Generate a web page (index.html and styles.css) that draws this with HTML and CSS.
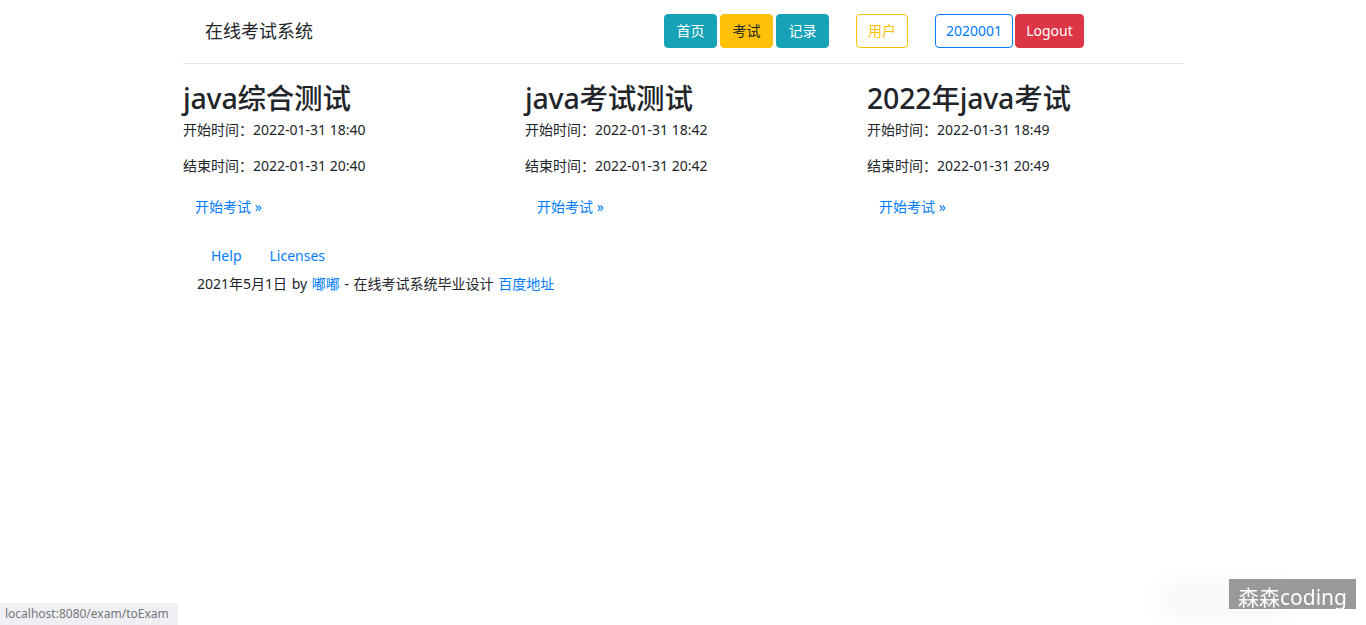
FILE: index.html
```html
<!DOCTYPE html>
<html lang="zh-CN">
<head>
<meta charset="utf-8">
<title>在线考试系统</title>
<link rel="stylesheet" href="styles.css">
</head>
<body>
<div class="container">
  <header class="navbar">
    <div class="brand">在线考试系统</div>
    <nav class="actions">
      <div class="group">
        <a class="btn btn-info">首页</a>
        <a class="btn btn-warning">考试</a>
        <a class="btn btn-info">记录</a>
      </div>
      <a class="btn btn-outline-warning">用户</a>
      <div class="group">
        <a class="btn btn-outline-primary">2020001</a>
        <a class="btn btn-danger">Logout</a>
      </div>
    </nav>
  </header>

  <main class="exams">
    <section class="exam">
      <h2>java综合测试</h2>
      <p>开始时间：2022-01-31 18:40</p>
      <p>结束时间：2022-01-31 20:40</p>
      <a class="btn-link">开始考试 »</a>
    </section>
    <section class="exam">
      <h2>java考试测试</h2>
      <p>开始时间：2022-01-31 18:42</p>
      <p>结束时间：2022-01-31 20:42</p>
      <a class="btn-link">开始考试 »</a>
    </section>
    <section class="exam">
      <h2>2022年java考试</h2>
      <p>开始时间：2022-01-31 18:49</p>
      <p>结束时间：2022-01-31 20:49</p>
      <a class="btn-link">开始考试 »</a>
    </section>
  </main>

  <footer class="footer">
    <ul class="footer-nav">
      <li><a>Help</a></li>
      <li><a>Licenses</a></li>
    </ul>
    <p class="copy">2021年5月1日 by <a>嘟嘟</a> - 在线考试系统毕业设计 <a>百度地址</a></p>
  </footer>
</div>

<div class="statusbar">localhost:8080/exam/toExam</div>
<div class="watermark">森森coding</div>
</body>
</html>
```

FILE: styles.css
```css
* { box-sizing: border-box; }

html, body {
  margin: 0;
  padding: 0;
  background: #fff;
}

body {
  font-family: "Noto Sans", "Noto Sans CJK SC", sans-serif;
  font-size: 14px;
  line-height: 21px;
  color: #212529;
}

a { color: #007bff; text-decoration: none; cursor: pointer; }

.container {
  width: 1000px;
  margin-left: 183px;
}

.navbar {
  display: flex;
  align-items: flex-start;
  height: 64px;
  padding-top: 14px;
  border-bottom: 1px solid #e1e3e6;
}

.brand {
  margin-left: 22px;
  font-size: 18px;
  line-height: 34px;
  color: #212529;
}

.actions {
  margin-left: auto;
  margin-right: 99px;
  display: flex;
  gap: 27px;
}

.group {
  display: flex;
  gap: 3px;
}

.btn {
  display: inline-block;
  height: 34px;
  width: 53px;
  padding: 0;
  line-height: 32px;
  border: 1px solid transparent;
  border-radius: 4px;
  font-size: 14px;
  text-align: center;
}

.btn-info { background: #17a2b8; border-color: #17a2b8; color: #fff; }
.btn-warning { background: #ffc107; border-color: #ffc107; color: #212529; }
.btn-danger { background: #dc3545; border-color: #dc3545; color: #fff; width: 69px; }
.btn-outline-warning { border-color: #ffc107; color: #ffc107; background: #fff; width: 52px; }
.btn-outline-primary { border-color: #007bff; color: #007bff; background: #fff; width: 78px; }

.group .btn-danger { margin-left: -1px; }

.exams {
  display: grid;
  grid-template-columns: 342px 342px 316px;
  padding-top: 16px;
}

.exam h2 {
  margin: 0;
  font-size: 28.5px;
  line-height: 36px;
  font-weight: 500;
  letter-spacing: -0.2px;
}

.exam p {
  margin: 3px 0 15px;
}

.btn-link {
  display: inline-block;
  padding: 6px 12px;
  margin-top: -1px;
  color: #007bff;
}

.footer {
  padding-left: 14px;
  padding-top: 22px;
}

.footer-nav {
  list-style: none;
  margin: 0;
  padding: 0;
  display: flex;
}

.footer-nav a {
  display: block;
  padding: 0 14px;
  line-height: 21px;
}

.copy {
  margin: 7px 0 0;
  word-spacing: 1px;
}

.statusbar {
  position: fixed;
  left: 0;
  bottom: 0;
  height: 22px;
  padding: 0 9px 0 5px;
  background: #eef0f4;
  border-top-right-radius: 4px;
  color: #777;
  font-size: 12px;
  line-height: 22px;
}

.watermark {
  position: fixed;
  right: 10px;
  bottom: 16px;
  height: 30px;
  padding: 3px 9px 0;
  background: #999;
  color: #fff;
  font-size: 21px;
  line-height: 30px;
  box-shadow: -70px 6px 30px rgba(0, 0, 0, 0.04);
}
```
